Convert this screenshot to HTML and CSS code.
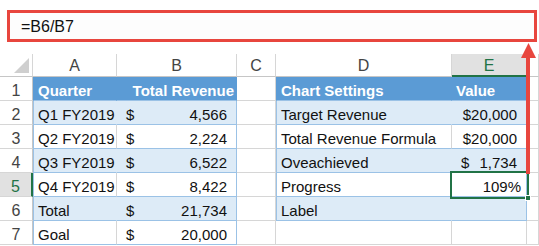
FILE: index.html
```html
<!DOCTYPE html>
<html lang="en">
<head>
    <meta charset="UTF-8">
    <title>Progress Formula</title>
    <link rel="stylesheet" href="styles.css">
</head>
<body>

    <div class="formula-bar">=B6/B7</div>

    <div class="sheet">
        <!-- column headers -->
        <div class="corner"><span class="corner-tri"></span></div>
        <div class="col-head">A</div>
        <div class="col-head">B</div>
        <div class="col-head">C</div>
        <div class="col-head">D</div>
        <div class="col-head active">E</div>
        <div class="col-head"></div>

        <!-- row 1 -->
        <div class="row-head">1</div>
        <div class="cell th left">Quarter</div>
        <div class="cell th edge right">Total Revenue</div>
        <div class="cell"></div>
        <div class="cell th left">Chart Settings</div>
        <div class="cell th edge">Value</div>
        <div class="cell"></div>

        <!-- row 2 -->
        <div class="row-head">2</div>
        <div class="cell band left">Q1 FY2019</div>
        <div class="cell band edge money"><span>$</span><span>4,566</span></div>
        <div class="cell"></div>
        <div class="cell band left">Target Revenue</div>
        <div class="cell band edge num">$20,000</div>
        <div class="cell"></div>

        <!-- row 3 -->
        <div class="row-head">3</div>
        <div class="cell plain left">Q2 FY2019</div>
        <div class="cell plain edge money"><span>$</span><span>2,224</span></div>
        <div class="cell"></div>
        <div class="cell plain left">Total Revenue Formula</div>
        <div class="cell plain edge num">$20,000</div>
        <div class="cell"></div>

        <!-- row 4 -->
        <div class="row-head">4</div>
        <div class="cell band left">Q3 FY2019</div>
        <div class="cell band edge money"><span>$</span><span>6,522</span></div>
        <div class="cell"></div>
        <div class="cell band left">Oveachieved</div>
        <div class="cell band edge money"><span>$</span><span>1,734</span></div>
        <div class="cell"></div>

        <!-- row 5 -->
        <div class="row-head active">5</div>
        <div class="cell plain left">Q4 FY2019</div>
        <div class="cell plain edge money"><span>$</span><span>8,422</span></div>
        <div class="cell"></div>
        <div class="cell plain left">Progress</div>
        <div class="cell plain edge num selected">109%<span class="handle"></span></div>
        <div class="cell"></div>

        <!-- row 6 -->
        <div class="row-head">6</div>
        <div class="cell band left">Total</div>
        <div class="cell band edge money"><span>$</span><span>21,734</span></div>
        <div class="cell"></div>
        <div class="cell band left">Label</div>
        <div class="cell band edge"></div>
        <div class="cell"></div>

        <!-- row 7 -->
        <div class="row-head">7</div>
        <div class="cell plain left last">Goal</div>
        <div class="cell plain edge money last"><span>$</span><span>20,000</span></div>
        <div class="cell"></div>
        <div class="cell"></div>
        <div class="cell"></div>
        <div class="cell"></div>
    </div>

    <!-- arrow pointing at the formula bar -->
    <svg class="arrow" width="15" height="131" viewBox="0 0 15 131">
        <polygon points="7.5,0 15,15 0,15" fill="#e8463e"/>
        <rect x="5" y="14" width="4" height="117" fill="#e8463e"/>
    </svg>

</body>
</html>
```

FILE: styles.css
```css
/* General Styles */
body {
    margin: 0;
    padding: 0;
    width: 539px;
    height: 246px;
    overflow: hidden;
    background: #ffffff;
    font-family: 'Liberation Sans', Arial, sans-serif;
    font-size: 15px;
    color: #111;
    position: relative;
}

.formula-bar {
    box-sizing: border-box;
    margin: 10px 2px 0 7px;
    height: 32px;
    border: 3px solid #e8463e;
    background: #fdfdfd;
    padding: 0 0 0 11px;
    line-height: 27px;
    font-size: 16px;
}

/* Grid */
.sheet {
    margin-top: 12px;
    display: grid;
    grid-template-columns: 33px 84px 120px 39px 176px 75px 1fr;
    grid-template-rows: 23px repeat(7, 24px);
}

.sheet > div {
    box-sizing: border-box;
    border-right: 1px solid #d6d6d6;
    border-bottom: 1px solid #d6d6d6;
    white-space: nowrap;
    line-height: 27px;
}

.corner {
    position: relative;
    border-bottom-color: #c6c6c6 !important;
}

.corner-tri {
    position: absolute;
    right: 3px;
    bottom: 3px;
    width: 0;
    height: 0;
    border-left: 15px solid transparent;
    border-bottom: 15px solid #cfcfcf;
}

.col-head {
    text-align: center;
    color: #444;
    font-size: 16px;
    line-height: 23px !important;
    border-bottom-color: #c6c6c6 !important;
}

.col-head.active {
    background: #e1e1e1;
    color: #217346;
    border-bottom: 2px solid #217346 !important;
}

.row-head {
    text-align: center;
    color: #444;
    font-size: 16px;
    border-right-color: #c6c6c6 !important;
}

.row-head.active {
    background: #e1e1e1;
    color: #217346;
    border-right: 2px solid #217346 !important;
}

/* Table cells */
.cell.left {
    padding-left: 4px;
    border-left: 1px solid #9bc2e6;
}

.th {
    background: #5b9bd5;
    color: #ffffff;
    font-weight: bold;
    border-bottom-color: #9bc2e6 !important;
}

.th.left {
    border-right-color: #5b9bd5 !important;
    border-left-color: #5b9bd5 !important;
}

.th.edge {
    padding-left: 4px;
    border-right-color: #5b9bd5 !important;
}

.th.right {
    text-align: right;
    padding: 0 2px 0 0 !important;
}

.band {
    background: #ddebf7;
    border-bottom-color: #9bc2e6 !important;
}

.band.left {
    border-right-color: #ddebf7 !important;
}

.plain {
    border-bottom-color: #9bc2e6 !important;
}

.edge {
    border-right-color: #9bc2e6 !important;
}

.money {
    display: flex;
    justify-content: space-between;
    padding: 0 9px 0 9px;
}

.num {
    text-align: right;
    padding-right: 9px;
}

.selected {
    position: relative;
    padding-right: 5px;
    outline: 2px solid #217346;
    outline-offset: 0;
}

.handle {
    position: absolute;
    right: -5px;
    bottom: -5px;
    width: 6px;
    height: 6px;
    background: #217346;
    border: 1px solid #ffffff;
    box-sizing: border-box;
}

.arrow {
    position: absolute;
    left: 521px;
    top: 43px;
}
```
